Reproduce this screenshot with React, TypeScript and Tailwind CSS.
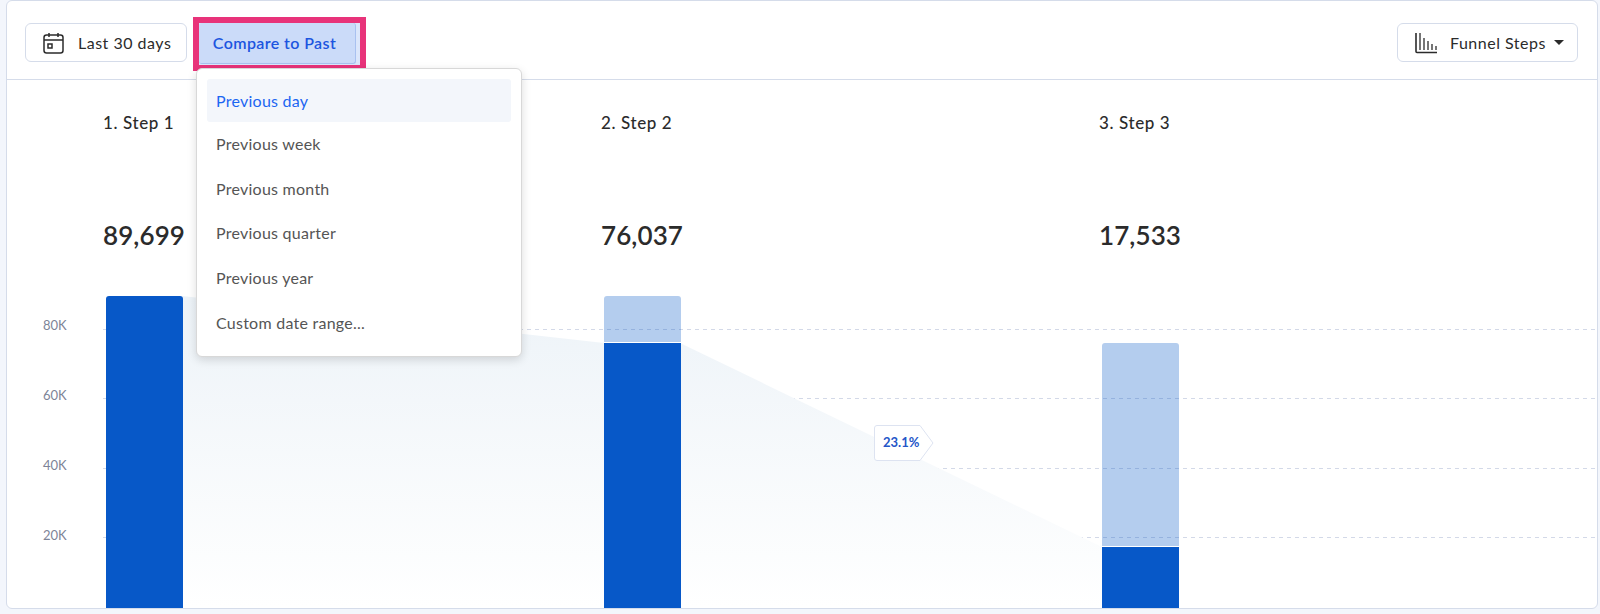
const menuItems = ["Previous week", "Previous month", "Previous quarter", "Previous year", "Custom date range..."];
const axisLabels = ["80K", "60K", "40K", "20K"];
const gridRows = [33, 102, 172, 241];

const steps = [
  { label: "1. Step 1", total: "89,699" },
  { label: "2. Step 2", total: "76,037" },
  { label: "3. Step 3", total: "17,533" },
];

function CalendarIcon() {
  return (
    <svg width="21" height="22" viewBox="0 0 21 22" fill="none" stroke="#2b2b2b" strokeWidth="1.5">
      <rect x="1" y="3" width="19" height="18" rx="2.5" />
      <path d="M1 8h19M6 1v4M15 1v4" />
      <rect x="5" y="12" width="4" height="4" />
    </svg>
  );
}

function BarsIcon() {
  return (
    <svg width="22" height="22" viewBox="0 0 22 22" fill="none" stroke="#2b2b2b" strokeWidth="1.3">
      <path d="M1 1v18.5a1 1 0 0 0 1 1h20" strokeWidth="1.6" />
      <path d="M5 1v17M9 6v12M13 9v9M17 12v6M21 14v4" />
    </svg>
  );
}

function ChartBackdrop() {
  return (
    <svg className="absolute inset-0" width="1590" height="312" viewBox="0 0 1590 312">
      <defs>
        <linearGradient id="funnelFill" x1="0" y1="0" x2="0" y2="1">
          <stop offset="0" stopColor="#edf3f8" />
          <stop offset="1" stopColor="#ffffff" />
        </linearGradient>
      </defs>
      {gridRows.map((y) => (
        <line key={y} x1="96" x2="1590" y1={y + 0.5} y2={y + 0.5} stroke="#d3d9e8" strokeDasharray="4 4" />
      ))}
      <polygon points="175,0 597,47 673,47 1095,251 1095,312 175,312" fill="url(#funnelFill)" />
    </svg>
  );
}

function Bar({ light, dark }: { light: number; dark: number }) {
  return (
    <div className="w-[77px] h-full flex flex-col justify-end">
      {light > 0 && <div className="bg-[#0758c8]/30 rounded-t-[3px]" style={{ height: light }} />}
      <div
        className={light > 0 ? "bg-[#0758c8] border-t border-white" : "bg-[#0758c8] rounded-t-[3px]"}
        style={{ height: dark }}
      />
    </div>
  );
}

export default function App() {
  return (
    <div className="h-[614px] w-full bg-[#f3f6fc] pl-[6px] pr-[2px] font-['Lato',sans-serif] text-[#2b2b2b]">
      <div className="h-[609px] flex flex-col bg-white border border-[#d5dcea] rounded-md overflow-hidden">
        <div className="h-[79px] shrink-0 border-b border-[#d5dcea] flex items-start justify-between pt-[22px] pl-[18px] pr-[19px]">
          <div className="flex items-start gap-[6px]">
            <button className="h-[39px] w-[162px] border border-[#d5dcea] rounded-md flex items-center gap-[14px] pl-[17px] text-[16px] tracking-[0.5px]">
              <CalendarIcon />
              Last 30 days
            </button>
            <div className="relative -mt-[6px]">
              <div className="border-[6px] border-[#e8337a] bg-[#dbe6fb] w-[173px] h-[54px]">
                <button className="h-[41px] w-[157px] bg-[#cbdbf9] border-r border-b border-[#a9c1f0] rounded-[3px] text-[16px] tracking-[0.4px] font-semibold text-[#1c55e0] pr-[5px]">
                  Compare to Past
                </button>
              </div>
              <div className="absolute z-10 top-[51px] left-[3px] w-[326px] h-[289px] bg-white border border-[#d8d8d8] rounded-md shadow-[0_3px_10px_rgba(0,0,0,0.14)] pt-[10px] pl-[10px] pr-[10px]">
                <div className="h-[43px] bg-[#f3f6fb] rounded-[3px] flex items-center pl-[9px] text-[16px] tracking-[0.25px] text-[#1c66f2]">
                  Previous day
                </div>
                {menuItems.map((item) => (
                  <div key={item} className="h-[44.6px] flex items-center pl-[9px] text-[16px] tracking-[0.25px] text-[#555]">
                    {item}
                  </div>
                ))}
              </div>
            </div>
          </div>
          <button className="h-[39px] w-[181px] border border-[#d5dcea] rounded-md flex items-center pl-[17px] text-[16px] tracking-[0.5px]">
            <BarsIcon />
            <span className="ml-[13px]">Funnel Steps</span>
            <span className="ml-[8px] w-0 h-0 border-x-[5px] border-x-transparent border-t-[5px] border-t-[#2b2b2b]" />
          </button>
        </div>

        <div className="flex flex-col flex-1">
          <div className="flex pl-[96px] pt-[32px]">
            {steps.map((step) => (
              <div key={step.label} className="w-[499px]">
                <div className="text-[17px] leading-[22px] tracking-[0.6px] font-medium">{step.label}</div>
                <div className="mt-[84px] text-[26px] leading-[34px] tracking-[0.1px] font-semibold">{step.total}</div>
              </div>
            ))}
          </div>
          <div className="relative mt-[44px] flex-1 flex">
            <ChartBackdrop />
            <div className="relative w-[99px] pl-[36px] pt-[21px] flex flex-col gap-[54px] text-[13px] leading-[16px] text-[#7d8497]">
              {axisLabels.map((label) => (
                <div key={label}>{label}</div>
              ))}
            </div>
            <div className="relative flex gap-[421px]">
              <Bar light={0} dark={312} />
              <Bar light={46} dark={266} />
              <Bar light={203} dark={62} />
              <div className="absolute left-[768px] top-[129px]">
                <div className="relative w-[60px] h-[36px] flex items-center pl-[9px] text-[13px] font-bold text-[#2456c8]">
                  <svg className="absolute inset-0" width="60" height="36" viewBox="0 0 60 36">
                    <path
                      d="M3 .5H46L59 18 46 35.5H3a2.5 2.5 0 0 1-2.5-2.5V3A2.5 2.5 0 0 1 3 .5Z"
                      fill="#fff"
                      stroke="#dde3f1"
                    />
                  </svg>
                  <span className="relative">23.1%</span>
                </div>
              </div>
            </div>
          </div>
        </div>
      </div>
    </div>
  );
}
